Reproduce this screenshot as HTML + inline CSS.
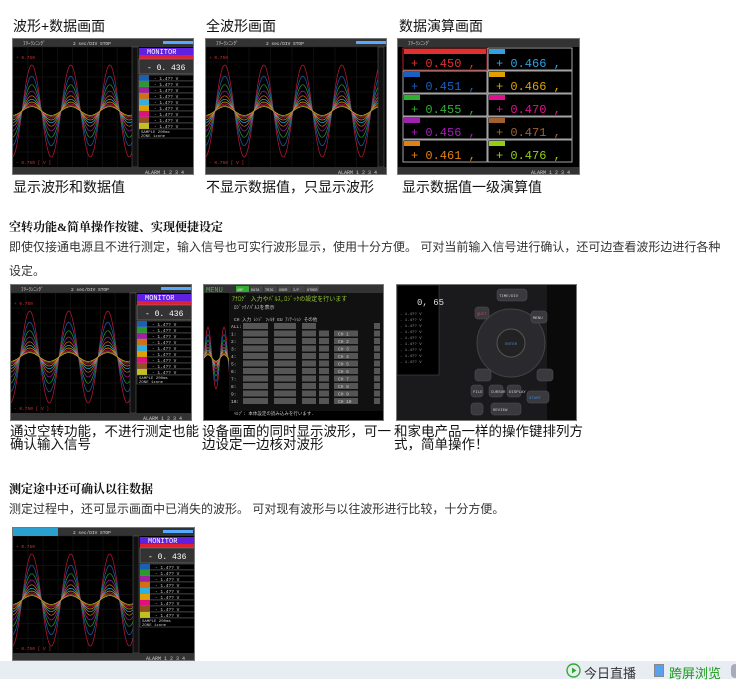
<!DOCTYPE html>
<html><head><meta charset="utf-8"><style>
*{margin:0;padding:0;box-sizing:border-box}
body{width:736px;height:679px;background:#fff;position:relative;overflow:hidden;font-family:"Liberation Sans","Noto Sans CJK SC",sans-serif;color:#222}
.a{position:absolute}
.t{font-size:14px;color:#111;white-space:nowrap}
.c{font-size:13.5px;color:#111;line-height:13px}
.scr{position:absolute;background:#000;border:1px solid #777;overflow:hidden}
.h{font-size:12px;font-weight:bold;font-family:"Liberation Serif","Noto Serif CJK SC",serif;color:#111}
.p{font-size:12px;color:#333;line-height:24px}
</style></head><body>
<div class="a t" style="left:13px;top:16px">波形+数据画面</div>
<div class="a t" style="left:206px;top:16px">全波形画面</div>
<div class="a t" style="left:399px;top:16px">数据演算画面</div>

<svg class="scr" id="s1" width="182" height="137" style="left:12px;top:38px"></svg>
<svg class="scr" id="s2" width="182" height="137" style="left:205px;top:38px"></svg>
<svg class="scr" id="s3" width="183" height="137" style="left:397px;top:38px"></svg>

<div class="a t" style="left:13px;top:177px">显示波形和数据值</div>
<div class="a t" style="left:206px;top:177px">不显示数据值，只显示波形</div>
<div class="a t" style="left:402px;top:177px">显示数据值一级演算值</div>

<div class="a h" style="left:9px;top:218px">空转功能&amp;简单操作按键、实现便捷设定</div>
<div class="a p" style="left:9px;top:235px;width:718px">即使仅接通电源且不进行测定，输入信号也可实行波形显示，使用十分方便。 可对当前输入信号进行确认，还可边查看波形边进行各种设定。</div>

<svg class="scr" id="s4" width="182" height="137" style="left:10px;top:284px"></svg>
<svg class="scr" id="s5" width="181" height="137" style="left:203px;top:284px"></svg>
<svg class="scr" id="s6" width="181" height="137" style="left:396px;top:284px"></svg>

<div class="a c" style="left:10px;top:425px;width:192px">通过空转功能，不进行测定也能确认输入信号</div>
<div class="a c" style="left:202px;top:425px;width:192px">设备画面的同时显示波形，可一边设定一边核对波形</div>
<div class="a c" style="left:394px;top:425px;width:192px">和家电产品一样的操作键排列方式，简单操作！</div>

<div class="a h" style="left:9px;top:480px">测定途中还可确认以往数据</div>
<div class="a p" style="left:9px;top:497px">测定过程中，还可显示画面中已消失的波形。 可对现有波形与以往波形进行比较，十分方便。</div>

<svg class="scr" id="s7" width="183" height="134" style="left:12px;top:527px"></svg>

<div class="a" style="left:0;top:661px;width:736px;height:18px;background:#e8edf3"></div>
<svg class="a" style="left:566px;top:663px" width="15" height="15"><circle cx="7.5" cy="7.5" r="6.5" fill="none" stroke="#3a3" stroke-width="1.4"/><path d="M6 4.5v6l4.5-3z" fill="#3a3"/></svg>
<div class="a" style="left:584px;top:663px;font-size:13px;color:#333">今日直播</div>
<div class="a" style="left:654px;top:664px;width:10px;height:13px;background:#5aa0f0;border:1px solid #888"></div>
<div class="a" style="left:669px;top:663px;font-size:13px;color:#1a9a1a">跨屏浏览</div>
<div class="a" style="left:731px;top:664px;width:8px;height:14px;border-radius:4px;background:#aab"></div>

<script>
const NS="http://www.w3.org/2000/svg";
function el(s,tag,at){const e=document.createElementNS(NS,tag);for(const k in at)e.setAttribute(k,at[k]);s.appendChild(e);return e}
function txt(s,x,y,t,c,sz){const e=el(s,'text',{x:x,y:y,fill:c,'font-size':sz||5,'font-family':'Liberation Mono,monospace'});e.textContent=t;return e}
const cols=['#c01838','#1a5fb0','#2a9a30','#a020a0','#d07010','#30b0e0','#e0a000','#e01080','#905020','#c0c020'];
function waves(s,w,cy,amp,per,ph){
 for(let i=0;i<10;i++){let a=amp*Math.pow(0.75,i)+1,d='';
  for(let x=0;x<=w;x+=1){const y=cy-a*Math.sin((x+ph)/per*2*Math.PI);d+=(x?'L':'M')+x+' '+y.toFixed(1)}
  el(s,'path',{d:d,fill:'none',stroke:cols[i],'stroke-width':0.7})}
}
function topbar(s,w,title){el(s,'rect',{x:0,y:0,width:w,height:8,fill:'#333'});txt(s,10,6,title,'#ddd',5);txt(s,60,6,'2  sec/DIV STOP','#ddd',4.5);el(s,'rect',{x:150,y:2,width:30,height:3,fill:'#5af'})}
function grid(s,x0,w,y0,h){for(let x=x0;x<x0+w;x+=w/8)el(s,'line',{x1:x,y1:y0,x2:x,y2:y0+h,stroke:'#1c1c1c','stroke-width':.5});for(let y=y0;y<y0+h;y+=h/8)el(s,'line',{x1:x0,y1:y,x2:x0+w,y2:y,stroke:'#1c1c1c','stroke-width':.5})}
function bottom(s,w,h){el(s,'rect',{x:0,y:h-9,width:w,height:9,fill:'#333'});txt(s,w-50,h-2,'ALARM  1  2  3  4','#ccc',5)}
function monitor(s,x,y,val){el(s,'rect',{x:x,y:y,width:55,height:7,fill:'#6020e0'});txt(s,x+8,y+6,'MONITOR','#fff',7);el(s,'rect',{x:x,y:y+7,width:55,height:4,fill:'#e02030'});el(s,'rect',{x:x,y:y+11,width:55,height:15,fill:'#333',stroke:'#888','stroke-width':.5});txt(s,x+8,y+22,'-  '+val,'#fff',8);
 for(let i=0;i<9;i++){el(s,'rect',{x:x,y:y+27+i*6,width:55,height:6,fill:'#000',stroke:'#888','stroke-width':.4});el(s,'rect',{x:x,y:y+27+i*6,width:10,height:6,fill:cols[i+1]});txt(s,x+15,y+32+i*6,'- 1.4?? V','#ccc',4.5)}
 el(s,'rect',{x:x,y:y+81,width:55,height:9,fill:'#000',stroke:'#888','stroke-width':.4});txt(s,x+2,y+85,'SAMPLE 200ms','#ccc',4);txt(s,x+2,y+89,'ZONE  1zone','#ccc',4)}
function wave(id,W,H,full){const s=document.getElementById(id);const ww=full?W-10:W-63;
 topbar(s,W,'ﾌﾘｰﾗﾝﾆﾝｸﾞ');grid(s,0,ww,8,H-17);waves(s,ww,72,45,39,-9);el(s,'rect',{x:ww,y:8,width:6,height:H-17,fill:'#111',stroke:'#666','stroke-width':.5});
 txt(s,3,20,'+ 0.750','#c33',4.5);txt(s,3,H-12,'- 0.750 [ V ]','#c33',4.5);bottom(s,W,H);if(!full)monitor(s,W-56,9,'0. 436');return s}
wave('s1',182,137,false);wave('s2',182,137,true);wave('s4',182,137,false);
(function(){const s=wave('s7',183,134,false);el(s,'rect',{x:0,y:0,width:45,height:8,fill:'#2aa0d0'})})();
(function(){const s=document.getElementById('s3');el(s,'rect',{x:0,y:0,width:183,height:8,fill:'#333'});txt(s,10,6,'ﾌﾘｰﾗﾝﾆﾝｸﾞ','#ddd',5);
 const v=['0.450','0.466','0.451','0.466','0.455','0.470','0.456','0.471','0.461','0.476'];const c=['#e03030','#30a0e0','#1a60c0','#e0a000','#30b030','#e01090','#a020b0','#a06030','#e08010','#90d010'];
 for(let i=0;i<10;i++){const x=i%2?90:5,y=9+Math.floor(i/2)*23;el(s,'rect',{x:x,y:y,width:84,height:22,fill:'#000',stroke:i==0?'#e03030':'#ccc','stroke-width':.8});el(s,'rect',{x:x+1,y:y+1,width:i==0?82:16,height:5,fill:c[i]});txt(s,x+8,y+19,'+ '+v[i]+' ,',c[i],12)}
 bottom(s,183,137)})();
(function(){const s=document.getElementById('s5');el(s,'rect',{x:0,y:0,width:181,height:8,fill:'#333'});txt(s,2,7,'MENU','#5a5',7);['AMP','DATA','TRIG','USER','I/F','OTHER'].forEach(function(t,i){el(s,'rect',{x:32+i*14,y:1,width:13,height:6,fill:i?'#444':'#3a3'});txt(s,33+i*14,6,t,'#ddd',3.5)});
 waves(s,26,73,30,16,0);el(s,'rect',{x:25,y:8,width:156,height:118,fill:'#111'});txt(s,28,16,'ｱﾅﾛｸﾞ 入力やﾊﾞﾙｽ,ﾛｼﾞｯｸの設定を行います','#9c3',6);txt(s,30,24,'ﾛｼﾞｯｸ/ﾊﾟﾙｽを表示','#ccc',5);
 txt(s,30,36,'CH  入力   ﾚﾝｼﾞ  ﾌｨﾙﾀ  EU  ｱﾉﾃｰｼｮﾝ その他','#ccc',4.5);
 for(let i=0;i<11;i++){const y=38+i*7.5;txt(s,27,y+5,i?String(i)+':':'ALL:','#ccc',4.5);el(s,'rect',{x:39,y:y,width:25,height:6,fill:'#555'});el(s,'rect',{x:70,y:y,width:22,height:6,fill:'#555'});el(s,'rect',{x:98,y:y,width:14,height:6,fill:'#555'});if(i){el(s,'rect',{x:115,y:y,width:10,height:6,fill:'#555'});el(s,'rect',{x:130,y:y,width:24,height:6,fill:'#555'});txt(s,134,y+5,'CH '+i,'#ccc',4.5)}el(s,'rect',{x:170,y:y,width:6,height:6,fill:'#555'})}
 txt(s,30,130,'ﾍﾙﾌﾟ: 本体設定の読み込みを行います.','#ccc',4.5)})();
(function(){const s=document.getElementById('s6');el(s,'rect',{x:0,y:0,width:181,height:137,fill:'#1a1a1c'});el(s,'rect',{x:0,y:0,width:42,height:90,fill:'#000',stroke:'#555','stroke-width':.5});txt(s,20,20,'0, 65','#ddd',9);for(let i=0;i<9;i++)txt(s,3,30+i*6,'- 1.4?? V','#999',4);
 el(s,'rect',{x:150,y:0,width:31,height:137,fill:'#0a0a0a'});el(s,'circle',{cx:114,cy:58,r:34,fill:'#2a2a2e',stroke:'#444'});el(s,'circle',{cx:114,cy:58,r:14,fill:'#222',stroke:'#555'});txt(s,108,60,'ENTER','#48c',4);
 [[100,4,30,'TIME/DIV'],[78,22,14,'QUIT'],[134,26,16,'MENU'],[78,84,16,''],[140,84,16,''],[74,100,12,'FILE'],[92,100,14,'CURSOR'],[110,100,14,'DISPLAY'],[130,106,22,'START'],[74,118,12,''],[94,118,30,'REVIEW']].forEach(function(b){el(s,'rect',{x:b[0],y:b[1],width:b[2],height:12,rx:3,fill:'#3a3a3e',stroke:'#555','stroke-width':.5});txt(s,b[0]+2,b[1]+8,b[3],b[3]=='QUIT'?'#d44':(b[3]=='START'?'#48c':'#ccc'),4)})})();
</script>
</body></html>
